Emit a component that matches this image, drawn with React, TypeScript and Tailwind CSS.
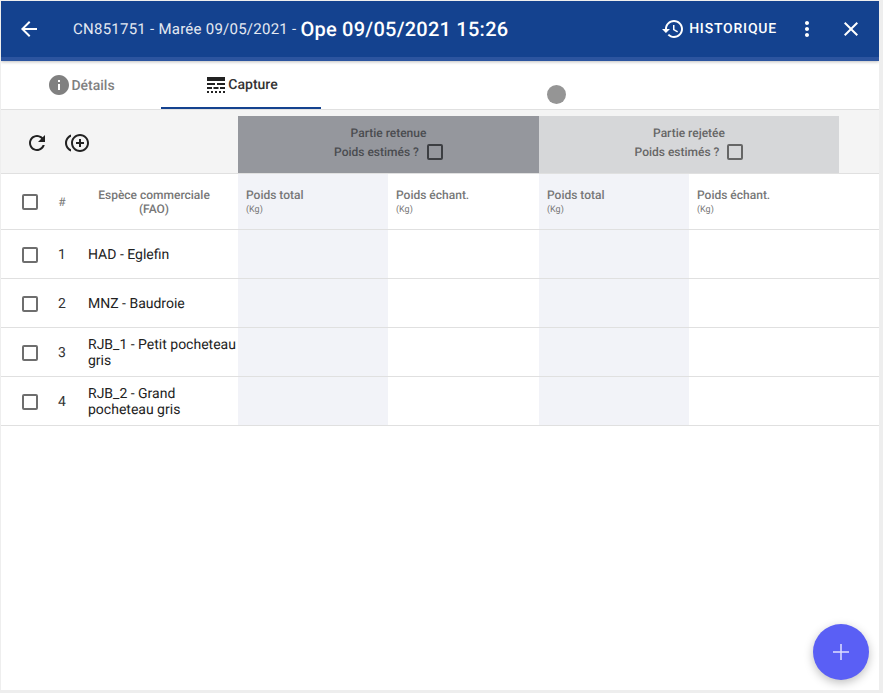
const ICONS: Record<string, string> = {
  back: 'M20 11H7.83l5.59-5.59L12 4l-8 8 8 8 1.41-1.41L7.83 13H20v-2z',
  history: 'M13 3c-4.97 0-9 4.03-9 9H1l3.89 3.89.07.14L9 12H6c0-3.87 3.13-7 7-7s7 3.13 7 7-3.13 7-7 7c-1.93 0-3.68-.79-4.94-2.06l-1.42 1.42C8.27 19.99 10.51 21 13 21c4.97 0 9-4.03 9-9s-4.03-9-9-9zm-1 5v5l4.28 2.54.72-1.21-3.5-2.08V8H12z',
  more: 'M12 8c1.1 0 2-.9 2-2s-.9-2-2-2-2 .9-2 2 .9 2 2 2zm0 2c-1.1 0-2 .9-2 2s.9 2 2 2 2-.9 2-2-.9-2-2-2zm0 6c-1.1 0-2 .9-2 2s.9 2 2 2 2-.9 2-2-.9-2-2-2z',
  close: 'M19 6.41L17.59 5 12 10.59 6.41 5 5 6.41 10.59 12 5 17.59 6.41 19 12 13.41 17.59 19 19 17.59 13.41 12z',
  info: 'M12 2C6.48 2 2 6.48 2 12s4.48 10 10 10 10-4.48 10-10S17.52 2 12 2zm1 15h-2v-6h2v6zm0-8h-2V7h2v2z',
  lines: 'M3 16h5v-2H3v2zm6.5 0h5v-2h-5v2zm6.5 0h5v-2h-5v2zM3 20h2v-2H3v2zm4 0h2v-2H7v2zm4 0h2v-2h-2v2zm4 0h2v-2h-2v2zm4 0h2v-2h-2v2zM3 12h8v-2H3v2zm10 0h8v-2h-8v2zM3 4v4h18V4H3z',
  refresh: 'M17.65 6.35C16.2 4.9 14.21 4 12 4c-4.42 0-7.99 3.58-7.99 8s3.57 8 7.99 8c3.73 0 6.84-2.55 7.73-6h-2.08c-.82 2.33-3.04 4-5.65 4-3.31 0-6-2.69-6-6s2.69-6 6-6c1.66 0 3.14.69 4.22 1.78L13 11h7V4l-2.35 2.35z',
  duplicate: 'M16 8h-2v3h-3v2h3v3h2v-3h3v-2h-3zM2 12c0-2.79 1.64-5.2 4.01-6.32V3.52C2.52 4.76 0 8.09 0 12s2.52 7.24 6.01 8.48v-2.16C3.64 17.2 2 14.79 2 12zm13-9c-4.96 0-9 4.04-9 9s4.04 9 9 9 9-4.04 9-9-4.04-9-9-9zm0 16c-3.86 0-7-3.14-7-7s3.14-7 7-7 7 3.14 7 7-3.14 7-7 7z',
};

const Icon = ({ name, className }: { name: string; className: string }) => (
  <svg viewBox="0 0 24 24" className={`w-6 h-6 shrink-0 fill-current ${className}`}>
    <path d={ICONS[name]} />
  </svg>
);

const Checkbox = ({ className = 'border-[#6e6e6e]' }: { className?: string }) => (
  <div className={`w-4 h-4 shrink-0 border-2 rounded-[2px] ${className}`} />
);

const species = [
  { id: 1, label: 'HAD - Eglefin' },
  { id: 2, label: 'MNZ - Baudroie' },
  { id: 3, label: 'RJB_1 - Petit pocheteau gris' },
  { id: 4, label: 'RJB_2 - Grand pocheteau gris' },
];

const WeightHead = ({ label, shaded, width }: { label: string; shaded?: boolean; width: string }) => (
  <div className={`${width} h-full pl-2 pt-[14px] ${shaded ? 'bg-[#f2f3f8]' : ''}`}>
    <div className="text-xs font-medium text-[#777] leading-[15px]">{label}</div>
    <div className="text-[9px] text-[#777] leading-[11px] mt-[2px]">(Kg)</div>
  </div>
);

export default function App() {
  return (
    <div className="w-[883px] h-[693px] bg-[#eeeeee] pt-px pl-px pr-1 pb-[3px] font-['Roboto',sans-serif] [text-rendering:geometricPrecision]">
      <div className="relative h-full bg-white flex flex-col overflow-hidden">
        <header className="h-[60px] shrink-0 bg-[#14428f] border-b-[4px] border-[#2c549f] flex items-center pl-4 pr-4 text-white shadow-[0_1px_3px_rgba(0,0,0,0.25)]">
          <Icon name="back" className="" />
          <div className="ml-8 text-[15px] text-[#e4e9f2] tracking-[0.25px]">CN851751 - Marée 09/05/2021 - </div>
          <div className="ml-1 text-xl font-medium tracking-[0.25px]">Ope 09/05/2021 15:26</div>
          <div className="ml-auto flex items-center">
            <Icon name="history" className="" />
            <span className="ml-1 text-sm font-medium tracking-[0.8px]">HISTORIQUE</span>
            <Icon name="more" className="ml-[18px]" />
            <Icon name="close" className="ml-5" />
          </div>
        </header>

        <div className="h-[49px] shrink-0 flex border-b border-[#e0e0e0]">
          <div className="w-40 flex items-center justify-center text-sm font-medium text-[#808080]">
            <Icon name="info" className="text-[#808080]" />
            <span className="mt-0.5">Détails</span>
          </div>
          <div className="w-40 flex items-center justify-center text-sm font-medium text-[#333] border-y-2 border-t-transparent border-b-[#14428f]">
            <Icon name="lines" className="text-[#222]" />
            Capture
          </div>
        </div>

        <div className="absolute left-[546px] top-[84px] w-[19px] h-[19px] rounded-full bg-[#959595]" />

        <div className="h-16 shrink-0 flex bg-[#f4f4f4] border-b border-[#e0e0e0]">
          <div className="w-[237px] flex items-center pl-6 pt-[3px] text-[#222]">
            <Icon name="refresh" className="" />
            <Icon name="duplicate" className="ml-4" />
          </div>
          <div className="w-[301px] mt-[6px] bg-[#95979d] flex flex-col items-center pt-[10px] text-xs font-medium text-[#4a4c50]">
            <div className="leading-[14px]">Partie retenue</div>
            <div className="flex items-center mt-[4px]">
              <span>Poids estimés ?</span>
              <Checkbox className="ml-2 border-[#3c3e42]" />
            </div>
          </div>
          <div className="w-[300px] mt-[6px] bg-[#d6d7d9] flex flex-col items-center pt-[10px] text-xs font-medium text-[#666]">
            <div className="leading-[14px]">Partie rejetée</div>
            <div className="flex items-center mt-[4px]">
              <span>Poids estimés ?</span>
              <Checkbox className="ml-2 border-[#666]" />
            </div>
          </div>
        </div>

        <div className="h-14 shrink-0 flex items-center border-b border-[#e0e0e0]">
          <div className="w-[237px] flex items-center pl-[21px]">
            <Checkbox />
            <div className="w-4 ml-4 text-center text-xs text-[#777]">#</div>
            <div className="w-[168px] text-center text-xs font-medium text-[#777] leading-[14px]">
              Espèce commerciale<br />(FAO)
            </div>
          </div>
          <WeightHead label="Poids total" shaded width="w-[150px]" />
          <WeightHead label="Poids échant." width="w-[151px]" />
          <WeightHead label="Poids total" shaded width="w-[150px]" />
          <WeightHead label="Poids échant." width="flex-1" />
        </div>

        {species.map((row) => (
          <div key={row.id} className="h-[49px] shrink-0 flex items-center border-b border-[#e0e0e0]">
            <div className="w-[237px] flex items-center pl-[21px] pt-0.5">
              <Checkbox />
              <div className="w-4 ml-4 text-center text-sm text-[#333]">{row.id}</div>
              <div className="w-[168px] pl-[18px] text-sm text-[#222] leading-4">{row.label}</div>
            </div>
            <div className="w-[150px] h-full bg-[#f2f3f8]" />
            <div className="w-[151px] h-full" />
            <div className="w-[150px] h-full bg-[#f2f3f8]" />
          </div>
        ))}

        <button className="absolute left-[812px] top-[623px] w-14 h-14 rounded-full bg-[#5a5ff5] flex items-center justify-center shadow-[0_3px_10px_rgba(0,0,0,0.25)]">
          <svg viewBox="0 0 16 16" className="w-4 h-4 stroke-[#dfe0ff] fill-none" strokeWidth="1.5">
            <path d="M8 0v16M0 8h16" />
          </svg>
        </button>
      </div>
    </div>
  );
}
